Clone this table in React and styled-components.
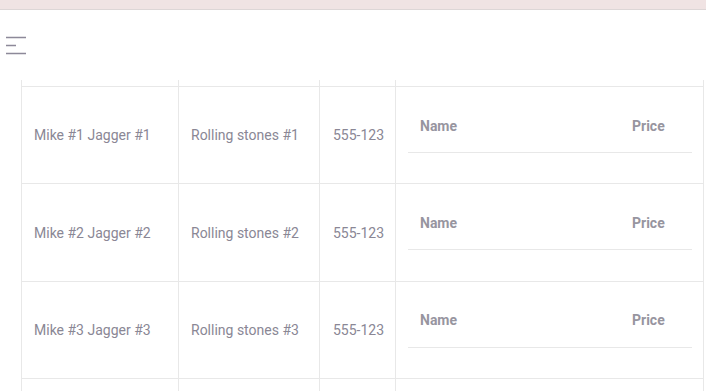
import React from "react";
import styled, { createGlobalStyle } from "styled-components";

const GlobalStyle = createGlobalStyle`
	html, body {
		margin: 0;
		padding: 0;
		background: #ffffff;
		font-family: Roboto, "Liberation Sans", sans-serif;
		overflow: hidden;
	}
`;

const bands = [
	{ id: 1, name: "Mike #1 Jagger #1", band: "Rolling stones #1", phone: "555-123" },
	{ id: 2, name: "Mike #2 Jagger #2", band: "Rolling stones #2", phone: "555-123" },
	{ id: 3, name: "Mike #3 Jagger #3", band: "Rolling stones #3", phone: "555-123" },
];

const columns = "157px 141px 76px 308px";

const MenuIcon = () => (
	<svg width="22" height="20" viewBox="0 0 22 20" fill="none">
		<path
			d="M0 1.5h20M0 9.5h10M0 17.5h20"
			stroke="#8d8999"
			strokeWidth="1.4"
		/>
	</svg>
);

// empty strip of column borders (rows scrolled out of view)
const Edge = ({ height, top }) => (
	<Stub height={height} top={top}>
		<StubCell />
		<StubCell />
		<StubCell />
		<StubCell />
	</Stub>
);

const App = () => {
	return (
		<Page>
			<GlobalStyle />
			<TopStrip />
			<Toolbar>
				<MenuButton aria-label="menu">
					<MenuIcon />
				</MenuButton>
			</Toolbar>

			<Table>
				<Edge height={6} />
				{bands.map((row) => (
					<Row key={row.id}>
						<Cell>{row.name}</Cell>
						<Cell>{row.band}</Cell>
						<Cell>{row.phone}</Cell>
						<NestedCell>
							<Nested>
								<NestedHead>
									<NestedTh>Name</NestedTh>
									<NestedTh price>Price</NestedTh>
								</NestedHead>
							</Nested>
						</NestedCell>
					</Row>
				))}
				<Edge height={40} top />
			</Table>
		</Page>
	);
};

export default App;

const Page = styled.div`
	width: 706px;
	height: 391px;
	overflow: hidden;
	display: flex;
	flex-direction: column;
`;

const TopStrip = styled.div`
	height: 9px;
	flex-shrink: 0;
	background: #f0e3e3;
	border-bottom: 1px solid #ddd6d6;
`;

const Toolbar = styled.div`
	height: 70px;
	flex-shrink: 0;
	display: flex;
	align-items: flex-start;
	padding-left: 6px;
	padding-top: 26px;
	box-sizing: border-box;
`;

const MenuButton = styled.div`
	display: flex;
	width: 22px;
	height: 20px;
`;

const Table = styled.div`
	margin-left: 21px;
	width: 683px;
	display: flex;
	flex-direction: column;
	border-left: 1px solid #e8e8e8;
	border-right: 1px solid #e8e8e8;
	box-sizing: border-box;
`;

const Stub = styled.div`
	display: grid;
	grid-template-columns: ${columns};
	height: ${(props) => props.height}px;
	flex-shrink: 0;
	border-top: ${(props) => (props.top ? "1px solid #e8e8e8" : "none")};
`;

const StubCell = styled.div`
	border-right: 1px solid #e8e8e8;

	&:last-child {
		border-right: none;
	}
`;

const Row = styled.div`
	display: grid;
	grid-template-columns: ${columns};
	border-top: 1px solid #e8e8e8;
	flex-shrink: 0;
`;

const Cell = styled.div`
	display: flex;
	align-items: center;
	padding: 0 13px 0 12px;
	border-right: 1px solid #e8e8e8;
	font-size: 14px;
	color: #8a8795;
	white-space: nowrap;
	box-sizing: border-box;

	&:nth-child(3) {
		padding-left: 13px;
	}
`;

const NestedCell = styled.div`
	padding: 13px 12px;
	box-sizing: border-box;
`;

const Nested = styled.div`
	height: 70.4px;
`;

const NestedHead = styled.div`
	display: grid;
	grid-template-columns: 1fr 60px;
	height: 53px;
	align-items: center;
	border-bottom: 1px solid #e8e8e8;
	box-sizing: border-box;
	padding-bottom: 1px;
`;

const NestedTh = styled.div`
	font-size: 14px;
	font-weight: 700;
	color: #97959f;
	padding-left: ${(props) => (props.price ? "0" : "12px")};
`;
